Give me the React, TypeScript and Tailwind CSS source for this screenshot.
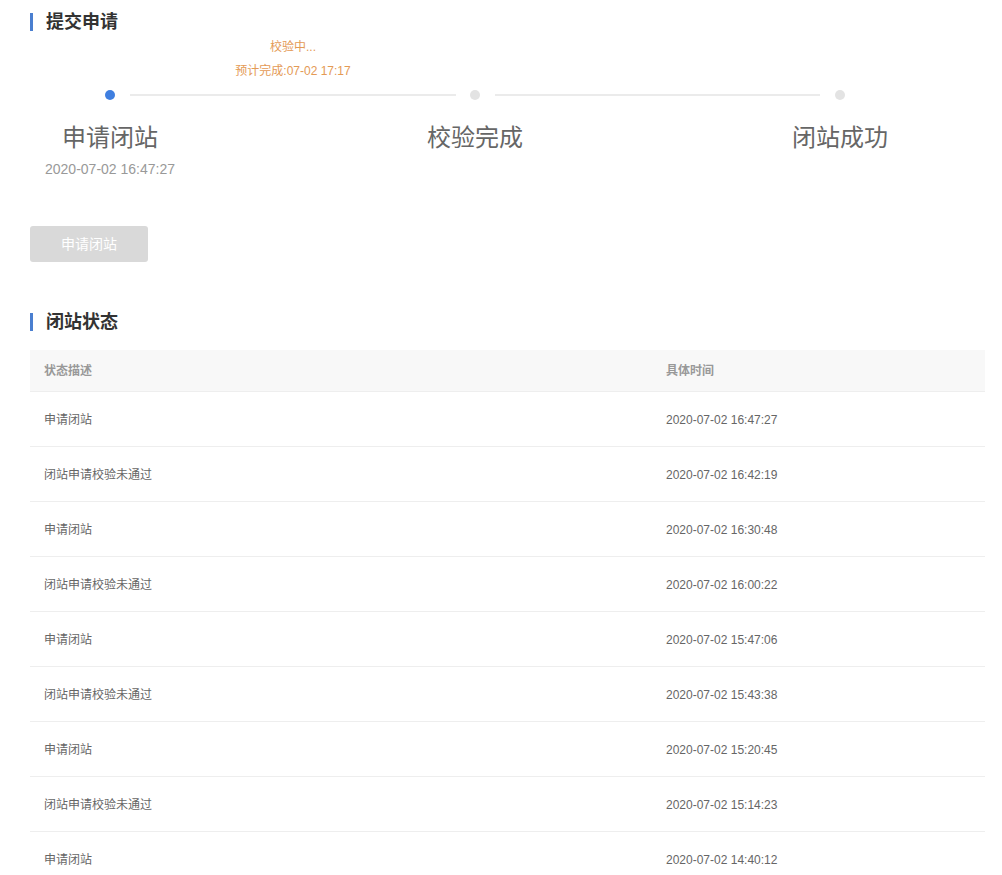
import React from "react";

const rows: [string, string][] = [
  ["申请闭站", "2020-07-02 16:47:27"],
  ["闭站申请校验未通过", "2020-07-02 16:42:19"],
  ["申请闭站", "2020-07-02 16:30:48"],
  ["闭站申请校验未通过", "2020-07-02 16:00:22"],
  ["申请闭站", "2020-07-02 15:47:06"],
  ["闭站申请校验未通过", "2020-07-02 15:43:38"],
  ["申请闭站", "2020-07-02 15:20:45"],
  ["闭站申请校验未通过", "2020-07-02 15:14:23"],
  ["申请闭站", "2020-07-02 14:40:12"],
];

function SectionTitle({ text }: { text: string }) {
  return (
    <div className="flex items-center h-[18px]">
      <div className="w-[3px] h-[18px] bg-[#4a7fd0]" />
      <div className="ml-[13px] text-[18px] leading-[18px] font-bold text-[#333]">{text}</div>
    </div>
  );
}

export default function App() {
  return (
    <div
      className="w-[1002px] h-[875px] overflow-hidden bg-white pl-[30px] pt-[13px]"
      style={{ fontFamily: '"Liberation Sans", "Noto Sans CJK SC", sans-serif' }}
    >
      <SectionTitle text="提交申请" />

      <div className="mt-[8px] ml-[100px] w-[326px] flex flex-col items-center gap-[8px] text-[12px] leading-[16px] text-[#e49a55]">
        <div>校验中...</div>
        <div>预计完成:07-02 17:17</div>
      </div>

      <div className="mt-[11px] ml-[75px] flex items-center h-[10px]">
        <div className="w-[10px] h-[10px] rounded-full bg-[#3f7fe0]" />
        <div className="ml-[15px] mr-[14px] w-[326px] h-[2px] bg-[#ebebeb]" />
        <div className="w-[10px] h-[10px] rounded-full bg-[#e3e3e3]" />
        <div className="ml-[15px] mr-[15px] w-[325px] h-[2px] bg-[#ebebeb]" />
        <div className="w-[10px] h-[10px] rounded-full bg-[#e3e3e3]" />
      </div>

      <div className="mt-[22px] flex gap-[205px]">
        <div className="w-[160px] flex flex-col items-center">
          <div className="text-[24px] leading-[32px] text-[#666]">申请闭站</div>
          <div className="mt-[5px] text-[14px] leading-[20px] text-[#999]">2020-07-02 16:47:27</div>
        </div>
        <div className="w-[160px] text-center text-[24px] leading-[32px] text-[#666]">校验完成</div>
        <div className="w-[160px] text-center text-[24px] leading-[32px] text-[#666]">闭站成功</div>
      </div>

      <button className="mt-[47px] w-[118px] h-[36px] rounded-[3px] bg-[#d9d9d9] text-white text-[14px] flex items-center justify-center">
        申请闭站
      </button>

      <div className="mt-[51px]">
        <SectionTitle text="闭站状态" />
      </div>

      <div className="mt-[19px] w-[955px]">
        <div className="flex h-[42px] items-center bg-[#f8f8f8] text-[12px] font-bold text-[#999] border-b border-[#eeeeee]">
          <div className="w-[622px] pl-[14px]">状态描述</div>
          <div className="pl-[14px]">具体时间</div>
        </div>
        {rows.map((r, i) => (
          <div key={i} className="flex h-[55px] pt-[2px] items-center text-[12px] text-[#666] border-b border-[#eeeeee]">
            <div className="w-[622px] pl-[14px]">{r[0]}</div>
            <div className="pl-[14px]">{r[1]}</div>
          </div>
        ))}
      </div>
    </div>
  );
}
